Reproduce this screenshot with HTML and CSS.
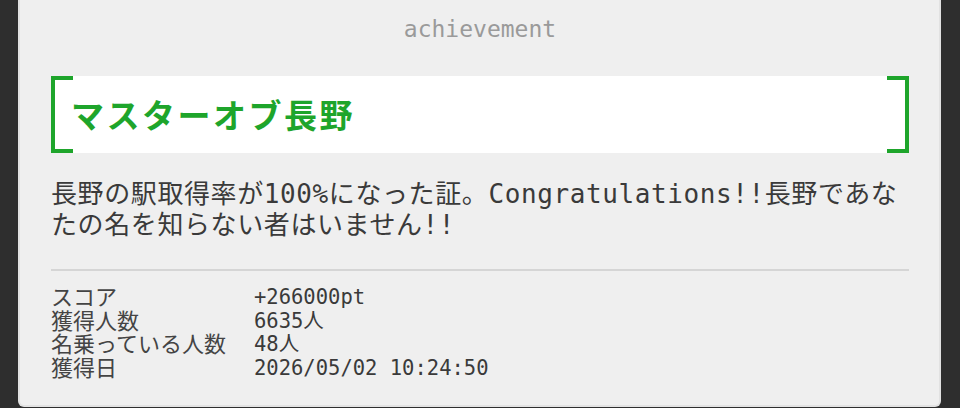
FILE: index.html
```html
<!DOCTYPE html>
<html lang="ja">
<head>
    <meta charset="UTF-8">
    <meta name="viewport" content="width=device-width, initial-scale=1.0">
    <title>achievement</title>
    <link rel="stylesheet" href="styles.css">
</head>
<body>
    <div class="card">
        <div class="card-kind">achievement</div>

        <div class="title-box">
            <h1>マスターオブ長野</h1>
        </div>

        <p class="desc">長野の駅取得率が100%になった証。Congratulations!!長野であなたの名を知らない者はいません!!</p>

        <hr class="divider">

        <dl class="stats">
            <dt>スコア</dt>
            <dd>+266000pt</dd>
            <dt>獲得人数</dt>
            <dd>6635人</dd>
            <dt>名乗っている人数</dt>
            <dd>48人</dd>
            <dt>獲得日</dt>
            <dd>2026/05/02 10:24:50</dd>
        </dl>
    </div>
</body>
</html>
```

FILE: styles.css
```css
body {
    font-family: "DejaVu Sans Mono", "Noto Sans CJK JP", monospace;
    background-color: #2e2e2e;
    margin: 0;
    padding: 0 19px 3px 18px;
}
.card {
    background: #efefef;
    border: 2px solid #e2e2e2;
    border-top: none;
    border-radius: 0 0 6px 6px;
    padding: 14px 30px 25px 31px;
}
.card-kind {
    text-align: center;
    color: #9a9a9a;
    font-size: 23px;
    line-height: 30px;
}
.title-box {
    position: relative;
    background: white;
    margin-top: 32px;
    padding: 18px 20px 19px;
}
.title-box::before,
.title-box::after {
    content: "";
    position: absolute;
    top: 0;
    bottom: 0;
    width: 18px;
    border: 4px solid #1ea52b;
}
.title-box::before {
    left: 0;
    border-right: none;
}
.title-box::after {
    right: 0;
    border-left: none;
}
h1 {
    margin: 0;
    color: #1ea52b;
    font-family: "Noto Sans CJK JP", sans-serif;
    font-size: 33px;
    line-height: 40px;
    font-weight: bold;
    letter-spacing: 2.5px;
}
.desc {
    margin: 26px 0 0;
    color: #3a3a3a;
    font-size: 26px;
    line-height: 31px;
    letter-spacing: 0.6px;
}
.divider {
    border: none;
    border-top: 2px solid #d5d5d5;
    margin: 28px 0 0;
}
.stats {
    display: grid;
    grid-template-columns: 203px auto;
    margin: 15px 0 0;
    color: #444;
    font-size: 22px;
    line-height: 23.5px;
}
.stats dt,
.stats dd {
    margin: 0;
}
.stats dd {
    font-size: 20.5px;
    color: #3a3a3a;
}
```
